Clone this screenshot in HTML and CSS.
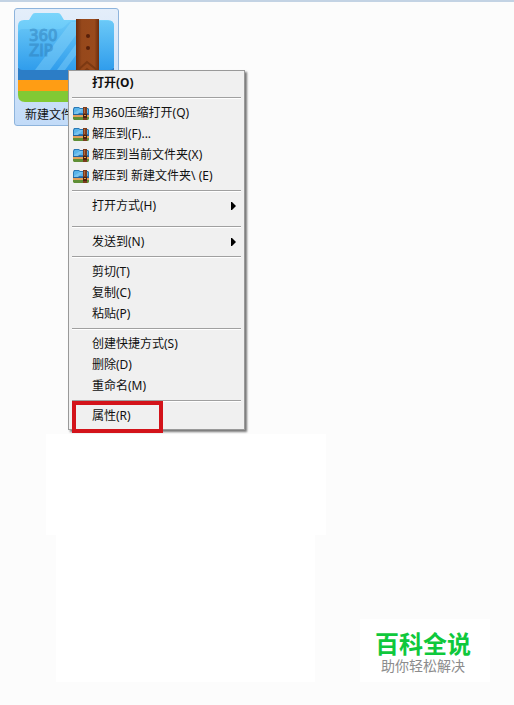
FILE: index.html
```html
<!DOCTYPE html>
<html lang="zh-CN">
<head>
<meta charset="utf-8">
<meta name="viewport" content="width=device-width, initial-scale=1">
<title>新建文件夹</title>
<link rel="stylesheet" href="styles.css">
</head>
<body>
<svg class="defs" aria-hidden="true">
  <defs>
    <linearGradient id="blue" x1="0" y1="0" x2="0" y2="1">
      <stop offset="0" stop-color="#6ac8f7"/><stop offset="1" stop-color="#309dec"/>
    </linearGradient>
    <linearGradient id="tab" x1="0" y1="0" x2="0" y2="1">
      <stop offset="0" stop-color="#7bd5fb"/><stop offset="1" stop-color="#46b1f3"/>
    </linearGradient>
    <linearGradient id="strap" x1="0" y1="0" x2="1" y2="0">
      <stop offset="0" stop-color="#6b2c0d"/><stop offset=".25" stop-color="#96481b"/><stop offset=".8" stop-color="#994a1c"/><stop offset="1" stop-color="#6b2c0d"/>
    </linearGradient>
    <symbol id="zip" viewBox="0 0 16 14">
      <path d="M0 3l1-2h5l1 1h8l1 1v6H0z" fill="#2a78b4"/>
      <path d="M1 3l1-1h4l1 1h8v4H1z" fill="#5ab4ea"/>
      <path d="M1 7l6-4h3L5 8H1z" fill="#78c4ef"/>
      <path d="M0 8h16v2H0z" fill="#2563a0"/>
      <path d="M0 9h16v3H0z" fill="#e2a05a"/>
      <path d="M0 11h16v2l-1 1H1l-1-1z" fill="#5f8f35"/>
      <path d="M10 1h4v13h-4z" fill="#7b3c1d"/>
      <path d="M11 2h1v5h-1z" fill="#ad6840"/>
      <path d="M10 8h4v4h-4z" fill="#4b2010"/>
      <path d="M11 9h2v1h-2z" fill="#dda34a"/>
    </symbol>
  </defs>
</svg>
<main class="desktop">
  <figure class="file">
    <svg class="file-icon" viewBox="0 0 99 90" aria-hidden="true">
      <path d="M1 50h96v32q0 7-7 7H8q-7 0-7-7z" fill="#82c934"/>
      <path d="M1 50h96v28H1z" fill="#ff9d14"/>
      <path d="M1 50h96v17H1z" fill="#2c7dc6"/>
      <path d="M7 7h5l3-5q1-2 3-2h23q2 0 3 2l3 5h44q6 0 6 6v42H1V13q0-6 6-6z" fill="url(#tab)"/>
      <path d="M1 21q0-5 5-5h36q3 0 5-2l4-4q2-2 5-2h36q5 0 5 5v39q0 5-5 5H6q-5 0-5-5z" fill="url(#blue)"/>
      <path d="M54 9h5v13L33 57H18zM59 31v11L48 57h-8z" fill="#8fd8fb" opacity=".4"/>
      <text class="icon-text" x="12" y="28">360</text>
      <text class="icon-text" x="12" y="43">ZIP</text>
      <path d="M59 6h23v78H59z" fill="url(#strap)"/>
      <path d="M61 57l9-8 10 8M61 64l9-8 10 8" fill="none" stroke="#7c3912" stroke-width="2"/>
      <circle cx="71" cy="23" r="2" fill="#58200a"/><circle cx="71" cy="35" r="2" fill="#58200a"/>
    </svg>
    <figcaption>新建文件夹</figcaption>
  </figure>
  <section class="lower">
    <div class="panels"><div class="panel-top"></div><div class="panel-bottom"></div></div>
    <aside class="brand"><strong>百科全说</strong><span>助你轻松解决</span></aside>
  </section>
  <div class="menu" role="menu">
    <button class="item default" role="menuitem">打开(O)</button>
    <hr>
    <button class="item" role="menuitem"><svg class="zip"><use href="#zip"/></svg>用360压缩打开(Q)</button>
    <button class="item" role="menuitem"><svg class="zip"><use href="#zip"/></svg>解压到(F)...</button>
    <button class="item" role="menuitem"><svg class="zip"><use href="#zip"/></svg>解压到当前文件夹(X)</button>
    <button class="item" role="menuitem"><svg class="zip"><use href="#zip"/></svg>解压到 新建文件夹\ (E)</button>
    <hr>
    <button class="item" role="menuitem">打开方式(H)<svg class="arrow" viewBox="0 0 5 8"><path d="M0 0h1l4 4-4 4H0z"/></svg></button>
    <hr class="spaced">
    <button class="item" role="menuitem">发送到(N)<svg class="arrow" viewBox="0 0 5 8"><path d="M0 0h1l4 4-4 4H0z"/></svg></button>
    <hr>
    <button class="item" role="menuitem">剪切(T)</button>
    <button class="item" role="menuitem">复制(C)</button>
    <button class="item" role="menuitem">粘贴(P)</button>
    <hr>
    <button class="item" role="menuitem">创建快捷方式(S)</button>
    <button class="item" role="menuitem">删除(D)</button>
    <button class="item" role="menuitem">重命名(M)</button>
    <hr>
    <button class="item marked" role="menuitem">属性(R)</button>
  </div>
</main>
</body>
</html>
```
FILE: styles.css
```css
*, *::after { box-sizing: border-box; }

body {
  margin: 0;
  background: #fcfcfc;
  color: #111;
  font: 12px/21px "Noto Sans", "Noto Sans CJK SC", sans-serif;
}

.defs { position: absolute; width: 0; height: 0; }

.desktop {
  position: relative;
  display: flex;
  flex-direction: column;
  justify-content: space-between;
  min-height: 100vh;
  padding: 6px 24px 23px 14px;
  border-top: 2px solid #c3d3e4;
}

.file {
  width: 105px;
  margin: 0;
  padding: 4px 2px 0;
  border: 1px solid #8eb4dc;
  border-radius: 3px;
  background: linear-gradient(#e4eefa, #c2dbf8);
}

.file-icon { display: block; width: 99px; height: 90px; }

.icon-text {
  font: 15px "DejaVu Sans", sans-serif;
  fill: #2f7fba;
  stroke: #2f7fba;
  stroke-width: 1px;
  opacity: .5;
}

figcaption { padding: 1px 0 0 8px; white-space: nowrap; }

.lower {
  display: flex;
  align-items: flex-end;
  justify-content: space-between;
  padding-left: 32px;
}

.panels { width: 280px; }
.panel-top { height: 101px; background: #fff; }
.panel-bottom { height: 147px; margin: 0 11px 0 10px; background: #fff; }

.brand {
  display: flex;
  flex-direction: column;
  align-items: center;
  width: 130px;
  padding: 9px 4px 8px 0;
  background: #fff;
  color: #8c8c8c;
  font-family: "Noto Sans CJK SC", sans-serif;
  font-size: 14px;
  line-height: 17px;
}

.brand strong { color: #0fc83c; font-size: 24px; font-weight: 700; line-height: 29px; }

.menu {
  position: absolute;
  top: 68px;
  left: 68px;
  width: 177px;
  padding: 2px 3px;
  border: 1px solid #999;
  background: #f0f0f0;
  box-shadow: 2px 2px 2px #777;
}

.item {
  display: flex;
  align-items: center;
  position: relative;
  width: 100%;
  height: 21px;
  padding: 0 5px 2px 20px;
  border: 0;
  background: none;
  color: #111;
  font: inherit;
  text-align: left;
  white-space: pre;
}

.default { font-weight: bold; }
.zip { width: 16px; height: 14px; margin: 0 3px 0 -19px; }
.arrow { width: 5px; height: 8px; margin-left: auto; }

hr {
  height: 2px;
  margin: 3px 0 4px;
  border: 0;
  border-top: 1px solid #a0a0a0;
  background: #fff;
}

.spaced { margin-top: 9px; }

.marked::after {
  content: "";
  position: absolute;
  top: -5px;
  left: 0;
  width: 91px;
  height: 32px;
  border: 4px solid #d3131a;
}
```
